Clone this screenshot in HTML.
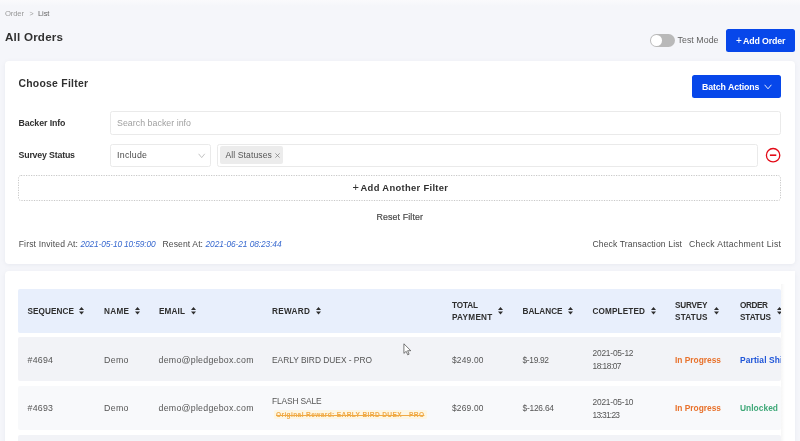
<!DOCTYPE html>
<html lang="en">
<head>
<meta charset="utf-8">
<title>All Orders</title>
<style>
html,body{margin:0;padding:0;}
body{width:800px;height:441px;overflow:hidden;background:#f5f6fa;font-family:"Liberation Sans",sans-serif;position:relative;}
.a{position:absolute;display:block;}
.t{position:absolute;white-space:pre;line-height:12px;height:12px;}
.card{position:absolute;background:#fff;border-radius:4px;box-shadow:0 1px 4px rgba(120,130,160,0.10);}
.btn{position:absolute;background:#0747ea;border-radius:2.5px;}
.inp{position:absolute;box-sizing:border-box;border:1px solid #eaeaea;border-radius:2.5px;background:#fff;}
.row{position:absolute;left:18px;width:763px;border-radius:2px;}
#pg{position:absolute;left:0;top:0;width:800px;height:441px;overflow:hidden;will-change:transform;}
#tbl{position:absolute;left:0;top:0;width:781px;height:441px;overflow:hidden;}
</style>
</head>
<body>
<div id="pg">
<div class="a" style="left:0;top:0;width:800px;height:6px;background:linear-gradient(to bottom,#fafafc,#f5f6fa);"></div>
<div class="card" style="left:5px;top:61px;width:790px;height:203px;"></div>
<div class="card" style="left:5px;top:271px;width:790px;height:190px;"></div>

<!-- toggle -->
<div class="a" style="left:650px;top:34px;width:25px;height:13px;border-radius:7px;background:#b9b9b9;"></div>
<div class="a" style="left:651.2px;top:35.2px;width:10.6px;height:10.6px;border-radius:50%;background:#fff;"></div>

<div class="btn" style="left:725.5px;top:28.8px;width:69.5px;height:23.2px;"></div>
<div class="btn" style="left:692.3px;top:74.9px;width:88.6px;height:22.8px;"></div>
<svg class="a" style="left:764px;top:83.5px" width="8" height="6" viewBox="0 0 8 6"><path d="M0.6 0.8 L4 4.8 L7.4 0.8" fill="none" stroke="#fff" stroke-width="0.9"/></svg>

<div class="inp" style="left:110px;top:111px;width:671px;height:23.5px;"></div>
<div class="inp" style="left:110px;top:143.7px;width:100.5px;height:23px;"></div>
<svg class="a" style="left:197.5px;top:152.5px" width="8" height="6" viewBox="0 0 8 6"><path d="M0.6 0.8 L3.7 4.6 L6.8 0.8" fill="none" stroke="#b5b5b5" stroke-width="0.8"/></svg>
<div class="inp" style="left:217px;top:143.7px;width:541px;height:23px;"></div>
<div class="a" style="left:220.3px;top:146.2px;width:62.5px;height:18.1px;background:#ececec;border-radius:2px;"></div>
<svg class="a" style="left:274.5px;top:153px" width="5" height="5" viewBox="0 0 5 5"><path d="M0.4 0.4 L4.6 4.6 M4.6 0.4 L0.4 4.6" stroke="#777" stroke-width="0.7" fill="none"/></svg>

<svg class="a" style="left:765px;top:147px" width="16" height="16" viewBox="0 0 16 16"><circle cx="8.1" cy="8.2" r="6.7" fill="none" stroke="#e30b17" stroke-width="1.3"/><path d="M4.9 8.2 H11.3" stroke="#e30b17" stroke-width="1.6"/></svg>

<svg class="a" style="left:18px;top:175px" width="763" height="26" viewBox="0 0 763 26"><rect x="0.5" y="0.5" width="762" height="25" rx="2.5" fill="none" stroke="#c9c9c9" stroke-width="1" stroke-dasharray="1.25 1.25"/></svg>

<div id="tbl">
<div class="row" style="top:289px;height:44px;background:#e8effc;"></div>
<div class="row" style="top:337.2px;height:43.8px;background:#f2f3f7;"></div>
<div class="row" style="top:386px;height:44px;background:#f8f9fb;"></div>
<div class="row" style="top:435px;height:10px;background:#f2f3f7;"></div>
<div class="a" style="left:273.5px;top:409.5px;width:153px;height:9.5px;background:#fdf6e3;border-radius:1.5px;"></div>
<svg class="a" style="left:79.1px;top:307.40000000000003px" width="5" height="7.4" viewBox="0 0 5 7.8" preserveAspectRatio="none"><path d="M2.5 0 L5 3.1 H0 Z M2.5 7.8 L5 4.7 H0 Z" fill="#2e2e2e"/></svg><svg class="a" style="left:134.6px;top:307.40000000000003px" width="5" height="7.4" viewBox="0 0 5 7.8" preserveAspectRatio="none"><path d="M2.5 0 L5 3.1 H0 Z M2.5 7.8 L5 4.7 H0 Z" fill="#2e2e2e"/></svg><svg class="a" style="left:190.6px;top:307.40000000000003px" width="5" height="7.4" viewBox="0 0 5 7.8" preserveAspectRatio="none"><path d="M2.5 0 L5 3.1 H0 Z M2.5 7.8 L5 4.7 H0 Z" fill="#2e2e2e"/></svg><svg class="a" style="left:315.6px;top:307.40000000000003px" width="5" height="7.4" viewBox="0 0 5 7.8" preserveAspectRatio="none"><path d="M2.5 0 L5 3.1 H0 Z M2.5 7.8 L5 4.7 H0 Z" fill="#2e2e2e"/></svg><svg class="a" style="left:497.6px;top:307.40000000000003px" width="5" height="7.4" viewBox="0 0 5 7.8" preserveAspectRatio="none"><path d="M2.5 0 L5 3.1 H0 Z M2.5 7.8 L5 4.7 H0 Z" fill="#2e2e2e"/></svg><svg class="a" style="left:567.6px;top:307.40000000000003px" width="5" height="7.4" viewBox="0 0 5 7.8" preserveAspectRatio="none"><path d="M2.5 0 L5 3.1 H0 Z M2.5 7.8 L5 4.7 H0 Z" fill="#2e2e2e"/></svg><svg class="a" style="left:650.6px;top:307.40000000000003px" width="5" height="7.4" viewBox="0 0 5 7.8" preserveAspectRatio="none"><path d="M2.5 0 L5 3.1 H0 Z M2.5 7.8 L5 4.7 H0 Z" fill="#2e2e2e"/></svg><svg class="a" style="left:713.6px;top:307.40000000000003px" width="5" height="7.4" viewBox="0 0 5 7.8" preserveAspectRatio="none"><path d="M2.5 0 L5 3.1 H0 Z M2.5 7.8 L5 4.7 H0 Z" fill="#2e2e2e"/></svg><svg class="a" style="left:776.6px;top:307.40000000000003px" width="5" height="7.4" viewBox="0 0 5 7.8" preserveAspectRatio="none"><path d="M2.5 0 L5 3.1 H0 Z M2.5 7.8 L5 4.7 H0 Z" fill="#2e2e2e"/></svg>
<span class="t" style="left:27.50px;top:306.02px;font-size:8.2px;font-weight:700;color:#2e2e2e;letter-spacing:0.078px;">SEQUENCE</span>
<span class="t" style="left:104.00px;top:306.02px;font-size:8.2px;font-weight:700;color:#2e2e2e;letter-spacing:0.297px;">NAME</span>
<span class="t" style="left:159.00px;top:306.02px;font-size:8.2px;font-weight:700;color:#2e2e2e;letter-spacing:0.129px;">EMAIL</span>
<span class="t" style="left:272.00px;top:306.02px;font-size:8.2px;font-weight:700;color:#2e2e2e;letter-spacing:0.322px;">REWARD</span>
<span class="t" style="left:452.00px;top:300.02px;font-size:8.2px;font-weight:700;color:#2e2e2e;letter-spacing:-0.133px;">TOTAL</span>
<span class="t" style="left:452.00px;top:312.02px;font-size:8.2px;font-weight:700;color:#2e2e2e;letter-spacing:0.271px;">PAYMENT</span>
<span class="t" style="left:522.50px;top:306.02px;font-size:8.2px;font-weight:700;color:#2e2e2e;letter-spacing:-0.005px;">BALANCE</span>
<span class="t" style="left:592.50px;top:306.02px;font-size:8.2px;font-weight:700;color:#2e2e2e;letter-spacing:0.137px;">COMPLETED</span>
<span class="t" style="left:675.00px;top:300.02px;font-size:8.2px;font-weight:700;color:#2e2e2e;letter-spacing:-0.206px;">SURVEY</span>
<span class="t" style="left:675.00px;top:312.02px;font-size:8.2px;font-weight:700;color:#2e2e2e;letter-spacing:0.191px;">STATUS</span>
<span class="t" style="left:740.00px;top:300.02px;font-size:8.2px;font-weight:700;color:#2e2e2e;letter-spacing:-0.395px;">ORDER</span>
<span class="t" style="left:740.00px;top:312.02px;font-size:8.2px;font-weight:700;color:#2e2e2e;letter-spacing:-0.109px;">STATUS</span>
<span class="t" style="left:27.50px;top:354.02px;font-size:8.8px;font-weight:400;color:#555555;letter-spacing:0.258px;">#4694</span>
<span class="t" style="left:104.00px;top:354.02px;font-size:8.8px;font-weight:400;color:#555555;letter-spacing:0.344px;">Demo</span>
<span class="t" style="left:158.50px;top:354.02px;font-size:8.8px;font-weight:400;color:#555555;letter-spacing:0.258px;">demo@pledgebox.com</span>
<span class="t" style="left:272.00px;top:354.02px;font-size:8.4px;font-weight:400;color:#555555;letter-spacing:-0.011px;">EARLY BIRD DUEX - PRO</span>
<span class="t" style="left:452.00px;top:354.02px;font-size:8.4px;font-weight:400;color:#555555;letter-spacing:0.203px;">$249.00</span>
<span class="t" style="left:522.50px;top:354.02px;font-size:8.4px;font-weight:400;color:#555555;letter-spacing:-0.318px;">$-19.92</span>
<span class="t" style="left:592.50px;top:347.02px;font-size:8.4px;font-weight:400;color:#555555;letter-spacing:-0.205px;">2021-05-12</span>
<span class="t" style="left:592.50px;top:360.02px;font-size:8.4px;font-weight:400;color:#555555;letter-spacing:-0.516px;">18:18:07</span>
<span class="t" style="left:675.00px;top:354.02px;font-size:8.4px;font-weight:700;color:#e8722c;letter-spacing:-0.009px;">In Progress</span>
<span class="t" style="left:740.00px;top:354.02px;font-size:8.4px;font-weight:700;color:#1f55d8;letter-spacing:0.145px;">Partial Shipped</span>
<span class="t" style="left:27.50px;top:402.02px;font-size:8.8px;font-weight:400;color:#555555;letter-spacing:0.258px;">#4693</span>
<span class="t" style="left:104.00px;top:402.02px;font-size:8.8px;font-weight:400;color:#555555;letter-spacing:0.344px;">Demo</span>
<span class="t" style="left:158.50px;top:402.02px;font-size:8.8px;font-weight:400;color:#555555;letter-spacing:0.258px;">demo@pledgebox.com</span>
<span class="t" style="left:272.00px;top:395.02px;font-size:8.4px;font-weight:400;color:#555555;letter-spacing:-0.139px;">FLASH SALE</span>
<span class="t" style="left:276.00px;top:409.02px;font-size:6.6px;font-weight:700;color:#f0aa45;letter-spacing:0.366px;text-decoration:line-through;text-decoration-thickness:0.6px;">Original Reward: EARLY BIRD DUEX - PRO</span>
<span class="t" style="left:452.00px;top:402.02px;font-size:8.4px;font-weight:400;color:#555555;letter-spacing:0.203px;">$269.00</span>
<span class="t" style="left:522.50px;top:402.02px;font-size:8.4px;font-weight:400;color:#555555;letter-spacing:-0.223px;">$-126.64</span>
<span class="t" style="left:592.50px;top:396.02px;font-size:8.4px;font-weight:400;color:#555555;letter-spacing:-0.205px;">2021-05-10</span>
<span class="t" style="left:592.50px;top:409.02px;font-size:8.4px;font-weight:400;color:#555555;letter-spacing:-0.730px;">13:31:23</span>
<span class="t" style="left:675.00px;top:402.02px;font-size:8.4px;font-weight:700;color:#e8722c;letter-spacing:-0.009px;">In Progress</span>
<span class="t" style="left:740.00px;top:402.02px;font-size:8.4px;font-weight:700;color:#3fa878;letter-spacing:0.042px;">Unlocked</span>
</div>

<div class="a" style="left:781px;top:271px;width:14px;height:170px;background:#fff;"></div>
<div class="a" style="left:781px;top:284px;width:4px;height:157px;background:linear-gradient(to right,rgba(0,0,0,0.035),rgba(0,0,0,0));"></div>

<span class="t" style="left:5.00px;top:8.02px;font-size:7.7px;font-weight:400;color:#9a9a9a;letter-spacing:-0.164px;">Order</span>
<span class="t" style="left:29.50px;top:8.02px;font-size:7px;font-weight:400;color:#a0a0a0;letter-spacing:0.000px;">></span>
<span class="t" style="left:38.00px;top:8.02px;font-size:7.7px;font-weight:400;color:#6a6a6a;letter-spacing:-0.156px;">List</span>
<span class="t" style="left:5.00px;top:31.02px;font-size:11.6px;font-weight:700;color:#303030;letter-spacing:0.215px;">All Orders</span>
<span class="t" style="left:677.50px;top:34.02px;font-size:8.8px;font-weight:400;color:#606060;letter-spacing:0.051px;">Test Mode</span>
<span class="t" style="left:736.00px;top:35.02px;font-size:10px;font-weight:400;color:#ffffff;letter-spacing:0.000px;">+</span>
<span class="t" style="left:743.00px;top:35.02px;font-size:8.8px;font-weight:700;color:#ffffff;letter-spacing:-0.125px;">Add Order</span>
<span class="t" style="left:18.50px;top:78.02px;font-size:10.4px;font-weight:700;color:#303030;letter-spacing:0.258px;">Choose Filter</span>
<span class="t" style="left:702.00px;top:81.02px;font-size:8.8px;font-weight:700;color:#ffffff;letter-spacing:-0.111px;">Batch Actions</span>
<span class="t" style="left:18.50px;top:117.02px;font-size:8.8px;font-weight:700;color:#303030;letter-spacing:-0.092px;">Backer Info</span>
<span class="t" style="left:117.00px;top:117.02px;font-size:8.8px;font-weight:400;color:#a0a0a0;letter-spacing:0.038px;">Search backer info</span>
<span class="t" style="left:18.50px;top:149.02px;font-size:8.8px;font-weight:700;color:#303030;letter-spacing:-0.181px;">Survey Status</span>
<span class="t" style="left:117.00px;top:149.02px;font-size:8.8px;font-weight:400;color:#4a4a4a;letter-spacing:0.271px;">Include</span>
<span class="t" style="left:225.50px;top:149.02px;font-size:8.6px;font-weight:400;color:#555555;letter-spacing:0.083px;">All Statuses</span>
<span class="t" style="left:352.50px;top:181.02px;font-size:11px;font-weight:400;color:#303030;letter-spacing:0.000px;">+</span>
<span class="t" style="left:360.50px;top:182.02px;font-size:9.4px;font-weight:700;color:#303030;letter-spacing:0.326px;">Add Another Filter</span>
<span class="t" style="left:376.50px;top:211.02px;font-size:8.8px;font-weight:400;color:#4a4a4a;letter-spacing:0.138px;-webkit-text-stroke:0.2px #4a4a4a;">Reset Filter</span>
<span class="t" style="left:18.70px;top:238.02px;font-size:8.6px;font-weight:400;color:#4a4a4a;letter-spacing:0.154px;">First Invited At:</span>
<span class="t" style="left:80.60px;top:238.02px;font-size:8.4px;font-weight:400;color:#3869cf;letter-spacing:-0.155px;font-style:italic;">2021-05-10 10:59:00</span>
<span class="t" style="left:162.50px;top:238.02px;font-size:8.6px;font-weight:400;color:#4a4a4a;letter-spacing:0.094px;">Resent At:</span>
<span class="t" style="left:205.50px;top:238.02px;font-size:8.4px;font-weight:400;color:#3869cf;letter-spacing:-0.093px;font-style:italic;">2021-06-21 08:23:44</span>
<span class="t" style="left:592.40px;top:238.02px;font-size:8.6px;font-weight:400;color:#4a4a4a;letter-spacing:0.127px;">Check Transaction List</span>
<span class="t" style="left:689.00px;top:238.02px;font-size:8.6px;font-weight:400;color:#4a4a4a;letter-spacing:0.324px;">Check Attachment List</span>
<!-- cursor -->
<svg class="a" style="left:403.2px;top:342.8px" width="10" height="14" viewBox="0 0 10 14"><path d="M0.9 0.8 L0.9 10.4 L3.2 8.3 L4.7 11.8 L6.1 11.2 L4.6 7.7 L7.8 7.7 Z" fill="#fff" stroke="#444" stroke-width="0.7" stroke-linejoin="round"/></svg>
</div>
</body>
</html>
